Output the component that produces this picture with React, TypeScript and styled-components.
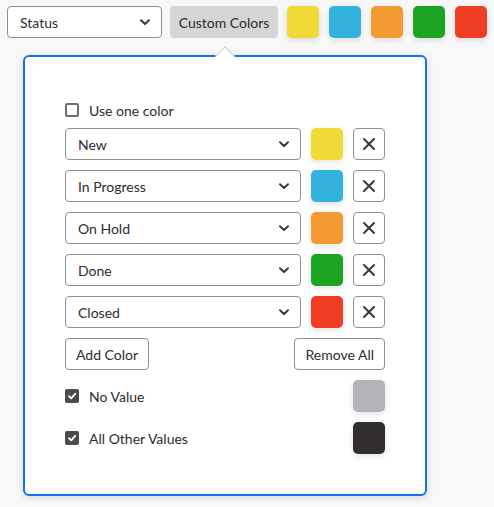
import React, { useState } from "react";
import styled, { createGlobalStyle } from "styled-components";

const GlobalStyle = createGlobalStyle`
  html, body {
    margin: 0;
    background: #f8f8f8;
    font-family: "Lato", "Open Sans", sans-serif;
    color: #2c2c2c;
  }
`;

const Page = styled.div`
  padding: 6px 7px;
`;

const TopBar = styled.div`
  display: flex;
  align-items: center;
`;

const SelectBox = styled.div<{ $width: number }>`
  display: flex;
  flex: none;
  align-items: center;
  justify-content: space-between;
  box-sizing: border-box;
  width: ${p => p.$width}px;
  height: 32px;
  padding: 0 10px 0 12px;
  background: #fff;
  border: 1px solid #8f8f8f;
  border-radius: 4px;
  font-size: 14px;
  color: #2c2c2c;
`;

const ToggleButton = styled.button`
  flex: none;
  box-sizing: border-box;
  width: 108px;
  height: 32px;
  margin-left: 8px;
  margin-right: 9px;
  padding: 0;
  border: none;
  border-radius: 4px;
  background: #d5d5d5;
  font-family: inherit;
  font-size: 14px;
  white-space: nowrap;
  color: #2c2c2c;
`;

const Swatch = styled.div<{ $color: string }>`
  width: 32px;
  height: 32px;
  flex: none;
  border-radius: 5px;
  background: ${p => p.$color};
  box-shadow: 0 2px 6px rgba(0, 0, 0, 0.12);
`;

const SwatchRow = styled.div`
  display: flex;
  gap: 10px;
`;

const Popover = styled.div`
  position: relative;
  box-sizing: border-box;
  width: 404px;
  margin: 17px 0 0 16px;
  padding: 45px 40px 40px;
  background: #fff;
  border: 2px solid #1473e6;
  border-radius: 6px;
  box-shadow: 0 2px 8px rgba(0, 0, 0, 0.12);
`;

const Notch = styled.div`
  position: absolute;
  top: -8px;
  left: 193px;
  width: 13px;
  height: 13px;
  background: #fff;
  border-left: 1px solid #cfcfcf;
  border-top: 1px solid #cfcfcf;
  transform: rotate(45deg);
`;

const Stack = styled.div`
  display: flex;
  flex-direction: column;
  gap: 10px;
`;

const CheckRow = styled.label`
  display: flex;
  align-items: center;
  height: 16px;
  gap: 10px;
  font-size: 14px;
`;

const LabeledRow = styled.div`
  display: flex;
  align-items: center;
  justify-content: space-between;
`;

const Box = styled.span<{ $checked: boolean }>`
  display: flex;
  align-items: center;
  justify-content: center;
  box-sizing: border-box;
  width: 14px;
  height: 14px;
  border-radius: 2px;
  border: 2px solid ${p => (p.$checked ? "#4b4b4b" : "#6e6e6e")};
  background: ${p => (p.$checked ? "#4b4b4b" : "#fff")};
`;

const ColorRow = styled.div`
  display: flex;
  align-items: center;
  gap: 10px;
`;

const IconButton = styled.button`
  display: flex;
  align-items: center;
  justify-content: center;
  width: 32px;
  height: 32px;
  padding: 0;
  background: #fff;
  border: 1px solid #8f8f8f;
  border-radius: 4px;
  color: #3a3a3a;
`;

const ActionRow = styled.div`
  display: flex;
  justify-content: space-between;
`;

const TextButton = styled.button`
  height: 32px;
  padding: 0 10px;
  background: #fff;
  border: 1px solid #8f8f8f;
  border-radius: 4px;
  font-family: inherit;
  font-size: 14px;
  color: #2c2c2c;
`;

const Chevron = () => (
  <svg width="12" height="12" viewBox="0 0 12 12">
    <path d="M2 4.2 6 8 10 4.2" fill="none" stroke="#3a3a3a" strokeWidth="2" strokeLinecap="round" strokeLinejoin="round" />
  </svg>
);

const Cross = () => (
  <svg width="14" height="14" viewBox="0 0 14 14">
    <path d="M2 2 12 12M12 2 2 12" stroke="#3a3a3a" strokeWidth="2" strokeLinecap="round" />
  </svg>
);

const Check = () => (
  <svg width="10" height="10" viewBox="0 0 10 10">
    <path d="M2 5.2 4.2 7.4 8.2 2.8" fill="none" stroke="#fff" strokeWidth="1.8" strokeLinecap="round" strokeLinejoin="round" />
  </svg>
);

const palette = ["#f1da35", "#34b1dc", "#f39a33", "#1aa422", "#ef3e24"];

const statuses = [
  { name: "New", color: "#f1da35" },
  { name: "In Progress", color: "#34b1dc" },
  { name: "On Hold", color: "#f39a33" },
  { name: "Done", color: "#1aa422" },
  { name: "Closed", color: "#ef3e24" },
];

const App: React.FC = () => {
  const [oneColor, setOneColor] = useState(false);
  const [noValue, setNoValue] = useState(true);
  const [otherValues, setOtherValues] = useState(true);

  return (
    <Page>
      <GlobalStyle />
      <TopBar>
        <SelectBox $width={155}>
          Status
          <Chevron />
        </SelectBox>
        <ToggleButton>Custom Colors</ToggleButton>
        <SwatchRow>
          {palette.map(color => (
            <Swatch key={color} $color={color} />
          ))}
        </SwatchRow>
      </TopBar>
      <Popover>
        <Notch />
        <Stack>
          <CheckRow onClick={() => setOneColor(!oneColor)}>
            <Box $checked={oneColor}>{oneColor ? <Check /> : null}</Box>
            Use one color
          </CheckRow>
          {statuses.map(status => (
            <ColorRow key={status.name}>
              <SelectBox $width={236}>
                {status.name}
                <Chevron />
              </SelectBox>
              <Swatch $color={status.color} />
              <IconButton>
                <Cross />
              </IconButton>
            </ColorRow>
          ))}
          <ActionRow>
            <TextButton>Add Color</TextButton>
            <TextButton>Remove All</TextButton>
          </ActionRow>
          <LabeledRow>
            <CheckRow onClick={() => setNoValue(!noValue)}>
              <Box $checked={noValue}>{noValue ? <Check /> : null}</Box>
              No Value
            </CheckRow>
            <Swatch $color="#b2b4b7" />
          </LabeledRow>
          <LabeledRow>
            <CheckRow onClick={() => setOtherValues(!otherValues)}>
              <Box $checked={otherValues}>{otherValues ? <Check /> : null}</Box>
              All Other Values
            </CheckRow>
            <Swatch $color="#332e2e" />
          </LabeledRow>
        </Stack>
      </Popover>
    </Page>
  );
};

export default App;
